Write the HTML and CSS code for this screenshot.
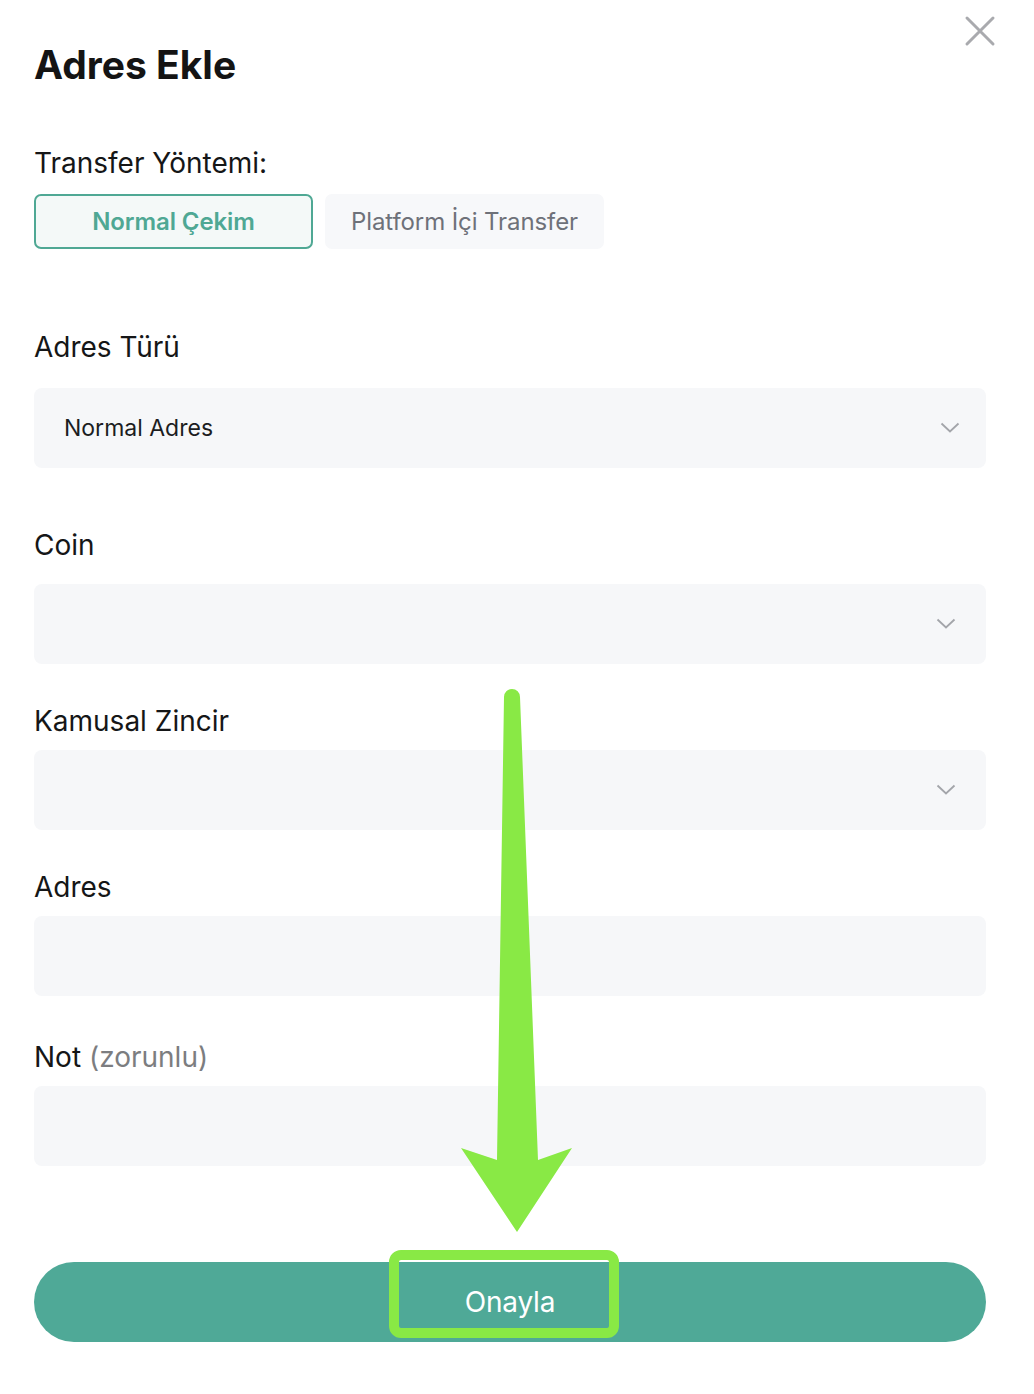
FILE: index.html
```html
<!DOCTYPE html>
<html lang="tr">
<head>
<meta charset="utf-8">
<title>Adres Ekle</title>
<link rel="stylesheet" href="styles.css">
</head>
<body>
<div class="modal">
  <button class="close" aria-label="Kapat">
    <svg width="32" height="32" viewBox="0 0 32 32"><path d="M3 3 L29 29 M29 3 L3 29" stroke="#a9aaae" stroke-width="3" stroke-linecap="round" fill="none"/></svg>
  </button>
  <h1 class="title">Adres Ekle</h1>

  <div class="label method-label">Transfer Yöntemi:</div>
  <div class="tabs">
    <div class="tab active">Normal Çekim</div>
    <div class="tab">Platform İçi Transfer</div>
  </div>

  <div class="label type-label">Adres Türü</div>
  <div class="field select type-field">
    <span class="value">Normal Adres</span>
    <svg class="chev" width="20" height="12" viewBox="0 0 20 12"><path d="M1.5 1.5 L10 9.5 L18.5 1.5" stroke="#a3a5aa" stroke-width="1.8" fill="none"/></svg>
  </div>

  <div class="label coin-label">Coin</div>
  <div class="field select chev-in">
    <svg class="chev" width="20" height="12" viewBox="0 0 20 12"><path d="M1.5 1.5 L10 9.5 L18.5 1.5" stroke="#a3a5aa" stroke-width="1.8" fill="none"/></svg>
  </div>

  <div class="label next-label">Kamusal Zincir</div>
  <div class="field select chev-in">
    <svg class="chev" width="20" height="12" viewBox="0 0 20 12"><path d="M1.5 1.5 L10 9.5 L18.5 1.5" stroke="#a3a5aa" stroke-width="1.8" fill="none"/></svg>
  </div>

  <div class="label next-label">Adres</div>
  <div class="field"></div>

  <div class="label note-label">Not <span class="muted">(zorunlu)</span></div>
  <div class="field"></div>

  <button class="submit">Onayla</button>
</div>

<svg class="overlay" width="1034" height="1394" viewBox="0 0 1034 1394">
  <path d="M504 697 A8 8 0 0 1 520 697 L538 1160 L572 1148 L517 1232 L461 1148 L497 1160 Z" fill="#89e945"/>
  <rect x="394" y="1255" width="220" height="78" rx="7" fill="none" stroke="#89e945" stroke-width="10"/>
</svg>
</body>
</html>
```
FILE: styles.css
```css
* { box-sizing: border-box; }
html, body { margin: 0; padding: 0; background: #fff; }
body {
  font-family: Inter, "Noto Sans", "Liberation Sans", sans-serif;
  color: #151617;
  width: 1034px;
  height: 1394px;
  position: relative;
  overflow: hidden;
}
.modal {
  position: relative;
  padding: 42px 48px 0 34px;
  display: flex;
  flex-direction: column;
}
.close {
  position: absolute;
  top: 15px;
  right: 38px;
  width: 32px;
  height: 32px;
  padding: 0;
  border: 0;
  background: none;
}
.close svg { display: block; }
.title {
  margin: 0;
  font-size: 39px;
  line-height: 46px;
  font-weight: 700;
  letter-spacing: 0;
  color: #141414;
}
.label {
  font-size: 28px;
  line-height: 32px;
  font-weight: 400;
  color: #151617;
  letter-spacing: 0;
}
.muted { color: #7c7d80; }
.method-label { margin-top: 59px; }
.tabs {
  margin-top: 15px;
  display: flex;
  gap: 12px;
}
.tab {
  width: 279px;
  height: 55px;
  border-radius: 7px;
  background: #f7f8fa;
  color: #6e7179;
  font-size: 24px;
  display: flex;
  align-items: center;
  justify-content: center;
  letter-spacing: -0.1px;
}
.tab.active {
  border: 2px solid #4fa894;
  background: #f4f9f8;
  color: #4fa894;
  font-weight: 600;
}
.type-label { margin-top: 82px; }
.coin-label { margin-top: 61px; }
.next-label { margin-top: 41px; }
.note-label { margin-top: 45px; }
.field {
  height: 80px;
  border-radius: 8px;
  background: #f6f7f9;
  margin-top: 13px;
  display: flex;
  align-items: center;
  padding: 0 26px 0 30px;
}
.type-field { margin-top: 25px; }
.coin-label + .field { margin-top: 23px; }
.select { justify-content: space-between; }
.chev-in { justify-content: flex-end; padding-right: 30px; }
.value {
  font-size: 23px;
  color: #1c1d1f;
  letter-spacing: 0;
}
.chev { display: block; }
.submit {
  margin-top: 96px;
  height: 80px;
  width: 100%;
  border: 0;
  border-radius: 40px;
  background: #4fa997;
  color: #fff;
  font-family: inherit;
  font-size: 28px;
  letter-spacing: -0.2px;
  padding: 0;
}
.overlay {
  position: absolute;
  top: 0;
  left: 0;
  pointer-events: none;
}
```
